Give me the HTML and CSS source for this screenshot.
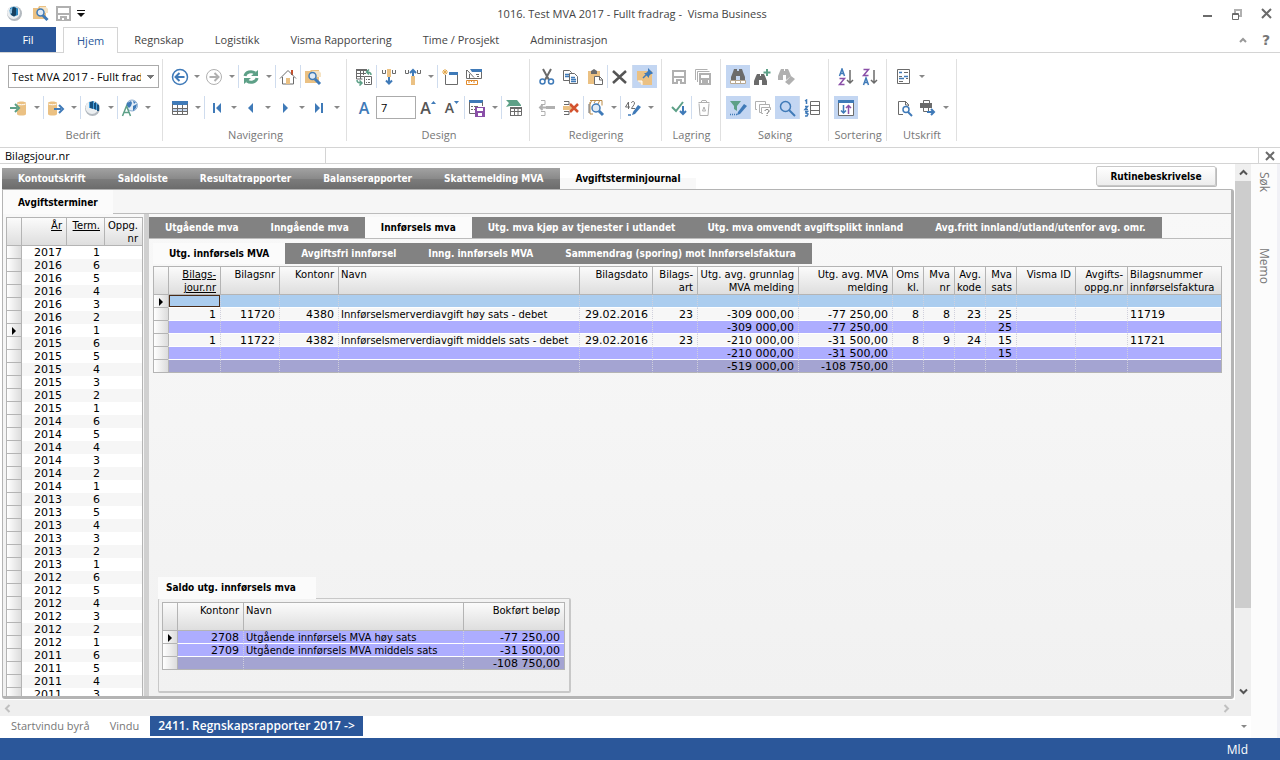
FILE: index.html
```html
<!DOCTYPE html>
<html lang="no">
<head>
<meta charset="utf-8">
<title>1016. Test MVA 2017 - Fullt fradrag - Visma Business</title>
<link rel="stylesheet" href="styles.css">
</head>
<body>
<header class="titlebar">
  <div class="quick">
    <button class="qbtn" aria-label="Visma"><svg width="17" height="17" viewBox="0 0 17 17"><circle cx="8.500" cy="8.500" r="7.500" fill="#b4bac0"/><circle cx="7.500" cy="7.500" r="6.500" fill="#eceff1"/><path d="M4 3l4-1.500 4 2V10l-4 1.500L4 9z" fill="#2a86c0"/><path d="M7 2l3 1v7l-2 1.500L5 10z" fill="#17405f"/><path d="M3 5l3-2v5l-2 1z" fill="#8fc0e0"/></svg></button>
    <button class="qbtn" aria-label="Søk firma"><svg width="17" height="17" viewBox="0 0 17 17"><path class="t" d="M1 3h5l1-2h7v13H1z"/><path d="M8 2h6l2 2v4H8z" fill="#f5e3c4"/><circle cx="8.500" cy="7.500" r="3.500" fill="#dfeaf5" class="bs"/><path class="bs w3" d="M11 10.500l4.500 4.500"/></svg></button>
    <button class="qbtn" aria-label="Lagre"><svg width="15" height="15" viewBox="0 0 15 15"><path d="M1 1h13v13H1z" fill="#fff" stroke="#b0b0b0" stroke-width="2"/><path class="l" d="M1 7h13v2H1zM4 10h7v4H4z"/><path fill="#fff" d="M6 12h2v2H6z"/></svg></button>
    <button class="qbtn small" aria-label="Flere valg"><svg width="8" height="7" viewBox="0 0 8 7"><path d="M0 0h8v1H0zM0 3h8L4 7z" fill="#111"/></svg></button>
  </div>
  <h1>1016. Test MVA 2017 - Fullt fradrag -&nbsp; Visma Business</h1>
  <div class="winbtns">
    <button aria-label="Minimer"><svg width="10" height="12" viewBox="0 0 10 12"><path class="g" d="M0 7h9v2H0z"/></svg></button>
    <button aria-label="Gjenopprett"><svg width="10" height="14" viewBox="0 0 10 14"><path class="ls w2" d="M3 6V3h6v6H7"/><path d="M.5 6.500h6v6h-6zM.5 7.500h6" fill="#fff" stroke="#6b6b6b"/></svg></button>
    <button aria-label="Lukk"><svg width="12" height="12" viewBox="0 0 12 12"><path class="gs w2" d="M1 1l9 9M10 1l-9 9"/></svg></button>
  </div>
</header>

<nav class="menu">
  <button class="file">Fil</button>
  <button class="tab active">Hjem</button>
  <button class="tab">Regnskap</button>
  <button class="tab">Logistikk</button>
  <button class="tab">Visma Rapportering</button>
  <button class="tab">Time / Prosjekt</button>
  <button class="tab">Administrasjon</button>
  <span class="grow"></span>
  <button class="help" aria-label="Skjul båndet"><svg width="8" height="6" viewBox="0 0 8 6"><path d="M1 5l3-3 3 3" fill="none" stroke="#999" stroke-width="2"/></svg></button>
  <button class="help mark">?</button>
</nav>

<section class="ribbon">
  <div class="group">
    <div class="tools"><select aria-label="Bedrift"><option>Test MVA 2017 - Fullt fradrag</option></select></div>
    <div class="tools">
      <button aria-label="Hent"><svg width="18" height="18" viewBox="0 0 18 18"><path class="t" d="M7 4c0-2 9-2 9 0v11c0 2-9 2-9 0z"/><path d="M7.500 5c2 1 6 1 8 0" fill="none" stroke="#fff"/><path d="M0 9h7M5 5l4 4-4 4" class="ns w2"/></svg></button><button class="dd" aria-label="Mer"></button><i class="sep"></i>
      <button aria-label="Send"><svg width="18" height="18" viewBox="0 0 18 18"><path class="t" d="M1 4c0-2 9-2 9 0v11c0 2-9 2-9 0z"/><path d="M1.500 5c2 1 6 1 8 0" fill="none" stroke="#fff"/><path d="M7 10h7M12 6l4 4-4 4" class="bs w2"/></svg></button><button class="dd" aria-label="Mer"></button><i class="sep"></i>
      <button aria-label="Rapport"><svg width="18" height="18" viewBox="0 0 18 18"><circle cx="8.500" cy="9.500" r="7.500" fill="#b4bac0"/><circle cx="8" cy="8.500" r="6.500" fill="#eceff1"/><path d="M6 3l3-1v8l-3-1zM10 4l2-1v8l-2-1zM13 5l2 1v6h-2z" fill="#17507f"/><path d="M5 3h1v6H5zM9 2h1v8H9zM12 4h1v7h-1z" fill="#4aa3e0"/></svg></button><button class="dd" aria-label="Mer"></button><i class="sep"></i>
      <button aria-label="Språk"><svg width="18" height="18" viewBox="0 0 18 18"><circle cx="11" cy="6.500" r="5.500" fill="#e4edf6" stroke="#8fb0d2"/><path class="b" d="M6 4l4-2 1 2-1 3-2 2-2-2zM12 7l4-2-1 4-3 3zM12 2l3 1-2 2z"/><path d="M1.500 17l4-10 4 10M3 13.500h5" class="ns"/></svg></button><button class="dd" aria-label="Mer"></button>
    </div>
    <p>Bedrift</p>
  </div>
  <div class="group">
    <div class="tools">
      <button aria-label="Tilbake"><svg width="18" height="18" viewBox="0 0 18 18"><circle cx="9" cy="9" r="7.500" class="bs n"/><path class="bs w2" d="M4.500 9h9M8.500 5l-4 4 4 4"/></svg></button><button class="dd nr" aria-label="Mer"></button>
      <button aria-label="Frem"><svg width="18" height="18" viewBox="0 0 18 18"><circle cx="9" cy="9" r="7.500" class="ls"/><path class="ls w2" d="M4.500 9h9M9.500 5l4 4-4 4"/></svg></button><button class="dd" aria-label="Mer"></button><i class="sep"></i>
      <button aria-label="Oppdater"><svg width="18" height="18" viewBox="0 0 18 18"><path class="ns w3" d="M3 8a6 5 0 0 1 10-3M15 10a6 5 0 0 1-10 3"/><path class="e" d="M16 2v6h-7zM2 16v-6h7z"/></svg></button><button class="dd" aria-label="Mer"></button><i class="sep"></i>
      <button aria-label="Hjem"><svg width="18" height="18" viewBox="0 0 18 18"><path fill="#c8502c" d="M12 2h2v5h-2z"/><path class="gs" d="M3.500 9v7h11V9M1 10.500l8-8 8 8"/><path class="t" d="M7 10h4v6H7z"/></svg></button><i class="sep"></i>
      <button aria-label="Søk"><svg width="18" height="18" viewBox="0 0 18 18"><path class="t" d="M1 3h5l1-1h8v13H1z"/><path d="M8 3h7l2 2v4H8z" fill="#f5e3c4"/><circle cx="8.500" cy="8" r="3.500" fill="#dfeaf5" class="bs"/><path class="bs w3" d="M11 11l5 5"/></svg></button>
    </div>
    <div class="tools">
      <button aria-label="Tabell"><svg width="18" height="18" viewBox="0 0 18 18"><path class="b" d="M1 2h16v4H1z"/><path d="M2 10h14v3H2z" fill="#c6d8ef"/><path class="gs" d="M1.500 5v10.500h15V5M1 9.500h16M1 12.500h16M6.500 6v10M11.500 6v10"/></svg></button><button class="dd" aria-label="Mer"></button><i class="sep"></i>
      <button aria-label="Første"><svg width="10" height="10" viewBox="0 0 10 10"><path class="b" d="M1 0h2v10H1zM9 0v10L4 5z"/></svg></button><button class="dd nr" aria-label="Mer"></button>
      <button aria-label="Forrige"><svg width="10" height="10" viewBox="0 0 10 10"><path class="b" d="M7 0v10L2 5z"/></svg></button><button class="dd nr" aria-label="Mer"></button>
      <button aria-label="Neste"><svg width="10" height="10" viewBox="0 0 10 10"><path class="b" d="M3 0v10l5-5z"/></svg></button><button class="dd nr" aria-label="Mer"></button>
      <button aria-label="Siste"><svg width="10" height="10" viewBox="0 0 10 10"><path class="b" d="M7 0h2v10H7zM1 0v10l5-5z"/></svg></button><button class="dd" aria-label="Mer"></button>
    </div>
    <p>Navigering</p>
  </div>
  <div class="group">
    <div class="tools">
      <button aria-label="Bytt visning"><svg width="18" height="18" viewBox="0 0 18 18"><path class="gs" d="M1.500 2.500h11M1.500 2v9h6M1 5.500h10M1 8.500h8M5.500 2v9M8.500 2v5M9.500 8.500h7v8h-7zM11 11.500h1M13 11.500h2M11 14.500h1M13 14.500h2"/><path class="g" d="M1 1h11v2H1z"/><path class="ns" d="M16 7c0-2-1-3-4-3M14 1.500L11.500 4 14 6.500M2 12c0 2 1 3 4 3M4.500 12.500L7 15l-2.500 2.500"/></svg></button><i class="sep"></i>
      <button aria-label="Sett inn kolonne"><svg width="18" height="18" viewBox="0 0 18 18"><path class="t" d="M7 1h4v8H7z"/><path class="gs" d="M2.500 2v3.500h3V2M12.500 2v3.500h3V2"/><path class="bs w2" d="M9 9v6M6 12.500l3 3 3-3"/></svg></button>
      <button aria-label="Fjern kolonne"><svg width="18" height="18" viewBox="0 0 18 18"><path class="t" d="M7 8h4v9H7z"/><path class="gs" d="M1.500 2v3.500h3V2M13.500 2v3.500h3V2"/><path class="bs w2" d="M9 8V2M6 5l3-3 3 3"/></svg></button><button class="dd" aria-label="Mer"></button><i class="sep"></i>
      <button aria-label="Nytt vindu"><svg width="18" height="18" viewBox="0 0 18 18"><path class="gs" d="M4.500 7v9.500h12V5"/><path class="b" d="M8 4h9v3H8z"/><path d="M4 1v6M1 4h6M2 2l4 4M6 2L2 6" stroke="#e3a84d" fill="none"/></svg></button>
      <button aria-label="Utforming"><svg width="18" height="18" viewBox="0 0 18 18"><path class="gs" d="M1.500 2v8.500h15V3M2 2l7 7.500M4.500 6v4M11 6.500h3M12 8.500h2"/><path class="b" d="M5 1h12v3H7z"/><path d="M1.500 12.500h11v4h-11zM4 12v3M6.500 12v2M9 12v3" fill="#fff" stroke="#e08a2c"/></svg></button>
    </div>
    <div class="tools">
      <button aria-label="Skrift" class="ltr blue">A</button><input aria-label="Skriftstørrelse" value="7"><button aria-label="Større skrift" class="ltr"><span>A</span><svg width="5" height="16" viewBox="0 0 5 16"><path class="b" d="M0 4l2.500-3L5 4z"/></svg></button><button aria-label="Mindre skrift" class="ltr sm"><span>A</span><svg width="5" height="16" viewBox="0 0 5 16"><path class="b" d="M0 1h5L2.500 4z"/></svg></button><i class="sep"></i>
      <button aria-label="Lagre oppsett"><svg width="18" height="18" viewBox="0 0 18 18"><path class="b" d="M1 1h14v3H1z"/><path class="gs" d="M1.500 3v11.500h6M14.500 3v4M3 7.500h2M6 7.500h4M3 10.500h2M6 10.500h2"/><path fill="#8a4fa8" d="M7 8h10v10H7z"/><path fill="#fff" d="M9 9h6v3H9zM10 14h4v3h-4z"/></svg></button><button class="dd" aria-label="Mer"></button><i class="sep"></i>
      <button aria-label="Standardoppsett"><svg width="18" height="18" viewBox="0 0 18 18"><path class="e" d="M1 1h11l4 5v1H5L1 8l3-4z"/><path class="gs" d="M5.500 8v9M5 16.500h11.500V8M5 12.500h12M9.500 9v8M13 9v8"/><path class="g" d="M5 8h12v2H5z"/></svg></button>
    </div>
    <p>Design</p>
  </div>
  <div class="group">
    <div class="tools">
      <button aria-label="Klipp ut"><svg width="18" height="18" viewBox="0 0 18 18"><path class="gs w2" d="M5 1l6 11M13 1L7 12"/><circle cx="4.500" cy="13.500" r="2.500" class="bs n"/><circle cx="13" cy="13.500" r="2.500" class="bs n"/></svg></button>
      <button aria-label="Kopier"><svg width="18" height="18" viewBox="0 0 18 18"><path class="gs" d="M1.500 2.500h6l2 2v8h-8z"/><path class="bs" d="M3 6.500h4M3 8.500h4"/><path d="M7.500 5.500h5l3 3v7h-8z" fill="#fff" stroke="#6b6b6b"/><path class="bs" d="M9 9.500h4M9 11.500h5M9 13.500h5"/></svg></button>
      <button aria-label="Lim inn"><svg width="18" height="18" viewBox="0 0 18 18"><path class="t" d="M2 3h12v13H2z"/><path class="g" d="M5 3l3-2 3 2v3H5z"/><path d="M8.500 8.500h5l3 3v5h-8z" fill="#fff" stroke="#6b6b6b"/><path class="gs" d="M13.500 8v4H17"/></svg></button><i class="sep"></i>
      <button aria-label="Slett"><svg width="18" height="18" viewBox="0 0 18 18"><path d="M2 3l13 12M15 3L2 15" stroke="#555" stroke-width="2.500"/></svg></button><i class="sep"></i>
      <button class="on" aria-label="Notat"><svg width="18" height="18" viewBox="0 0 18 18"><path class="t" d="M1 3h15v14H6l-5-5z"/><path d="M2 13h4v4" fill="#f7e4c2" stroke="#fff"/><path class="bs" d="M7 10l4-4"/><path class="b" d="M12 0l5 5-1 1-1 0-2 2v2L8 5h2l2-2z"/></svg></button>
    </div>
    <div class="tools">
      <button aria-label="Sett inn linje"><svg width="18" height="18" viewBox="0 0 18 18"><path class="ls" d="M3 1.500h4v4H3M3 12.500h4v4H3"/><path class="l" d="M8 7h9v3H8z"/><path class="ls w2" d="M2 8.500h6M4.500 6L2 8.500 4.500 11"/></svg></button>
      <button aria-label="Slett linje"><svg width="18" height="18" viewBox="0 0 18 18"><path class="gs" d="M2 2.500h5v3H2M2 12.500h5v3H2"/><path class="t" d="M1 7h9v4H1z"/><path d="M8 5l8 8M16 5l-8 8" stroke="#d3532f" stroke-width="2.500"/></svg></button><i class="sep"></i>
      <button aria-label="Finn"><svg width="18" height="18" viewBox="0 0 18 18"><path d="M3 1.500h12v5M3 3v12h3M5 1l-2 4M9 1L7 4M13 1l-2 4" fill="none" stroke="#b88a48"/><path class="gs" d="M2 5v9"/><circle cx="9" cy="9" r="4" fill="#dfeaf5" class="bs"/><path class="bs w3" d="M12 12l4 4"/></svg></button><button class="dd" aria-label="Mer"></button><i class="sep"></i>
      <button aria-label="Rediger verdi"><svg width="18" height="18" viewBox="0 0 18 18"><path class="gs" d="M4.500 10V3L1.500 8H6M7.500 4c0-2 3-2 3 0S8 8 7.500 9.500H11"/><path class="b" d="M14 6l3 2-6 7-3 1 1-3z"/><path class="bs" d="M4 16h3"/></svg></button><button class="dd" aria-label="Mer"></button>
    </div>
    <p>Redigering</p>
  </div>
  <div class="group">
    <div class="tools">
      <button aria-label="Lagre"><svg width="18" height="18" viewBox="0 0 18 18"><path class="ls w2" d="M3 3h12v12H3z"/><path class="l" d="M3 8h12v2H3zM6 11h6v5H6z"/><path fill="#fff" d="M8 13h2v3H8z"/></svg></button>
      <button aria-label="Lagre alle"><svg width="18" height="18" viewBox="0 0 18 18"><path class="ls" d="M1.500 12V1.500h12M3.500 14V3.500h12"/><path class="ls w2" d="M6 6h10v10H6z"/><path class="l" d="M6 10h10v2H6zM8 12h6v4H8z"/></svg></button>
    </div>
    <div class="tools">
      <button aria-label="Behandle"><svg width="18" height="18" viewBox="0 0 18 18"><path class="ns w2" d="M2 8l4 4 7-9"/><path class="bs w2" d="M13 7v8M10 12l3 3 3-3"/></svg></button><i class="sep"></i>
      <button aria-label="Forkast"><svg width="18" height="18" viewBox="0 0 18 18"><path class="ls" d="M4 4.500l1 12h8l1-12M3.500 3.500h11M6 3.500l1-2h4l1 2M7.500 12l1.500-4 1.500 4z"/></svg></button>
    </div>
    <p>Lagring</p>
  </div>
  <div class="group">
    <div class="tools">
      <button class="on" aria-label="Søk i liste"><svg width="18" height="18" viewBox="0 0 18 18"><path class="g" d="M5 1h3v2h2V1h3l1 3 2 5v3h-5V8H7v4H2V9l2-5z"/><path d="M1.500 12.500h15v3h-15zM6.500 12v4M11.500 12v4" fill="#fff" stroke="#b8a890"/></svg></button>
      <button aria-label="Utvid søk"><svg width="18" height="18" viewBox="0 0 18 18"><path class="g" d="M4 6h3v2h1V6h3l1 2 2 5v4H9v-5H6v5H1v-4l2-5z"/><path class="ns w2" d="M14 1v7M10.500 4.500h7"/></svg></button>
      <button aria-label="Nullstill søk"><svg width="18" height="18" viewBox="0 0 18 18"><path class="l" d="M4 1h3v2h1V1h3l1 2 2 5-5 4V7H6v5H1V8l2-5zM8 14l6-6 4 3-6 6z"/></svg></button>
    </div>
    <div class="tools">
      <button class="on" aria-label="Rediger filter"><svg width="18" height="18" viewBox="0 0 18 18"><path class="e" d="M1 2h11L8 7v5l-3-2V7z"/><path class="b" d="M15 5l3 2-7 8-3 1 1-3z"/><path d="M1 15.500h7" class="bs" stroke-dasharray="1 1"/></svg></button><i class="sep"></i>
      <button aria-label="Hvor brukt"><svg width="18" height="18" viewBox="0 0 18 18"><path class="ls" d="M3 10.500H1.500v-8h10V5M7 13.500H5.500v-8h10V9M9 14.500H7.500v-6h9V11"/><path class="gs" d="M11 12c0-2 4-2 4 0s-2 1-2 3M13 16v1"/></svg></button><button class="on" aria-label="Forstørr"><svg width="18" height="18" viewBox="0 0 18 18"><circle cx="7.500" cy="7.500" r="5" class="bs n"/><path class="bs w2" d="M11 11l6 6"/></svg></button><i class="sep"></i>
      <button aria-label="Nummerer"><svg width="18" height="18" viewBox="0 0 18 18"><path class="gs" d="M7.500 2.500h9v13h-9zM7 6.500h10M7 11.500h10"/><path class="bs" d="M2 2l1.500-1v4M2 7.500h2.500L2 10.500h3M2 12.500h2.500L3 14l2 1-1 2H2"/></svg></button>
    </div>
    <p>Søking</p>
  </div>
  <div class="group">
    <div class="tools">
      <button aria-label="Stigende"><svg width="18" height="18" viewBox="0 0 18 18"><path class="bs" d="M2.500 8l2.500-7 2.500 7M3.500 5.500h3"/><path d="M2.500 10.500h5l-5 6h5" fill="none" stroke="#8a4fa8" stroke-width="1.500"/><path class="gs" stroke-width="1.500" d="M13 2v13M10 12l3 3 3-3"/></svg></button>
      <button aria-label="Synkende"><svg width="18" height="18" viewBox="0 0 18 18"><path class="bs" d="M2.500 17l2.500-7 2.500 7M3.500 14.500h3"/><path d="M2.500 1.500h5l-5 6h5" fill="none" stroke="#8a4fa8" stroke-width="1.500"/><path class="gs" stroke-width="1.500" d="M13 2v13M10 12l3 3 3-3"/></svg></button>
    </div>
    <div class="tools">
      <button class="on" aria-label="Sortering"><svg width="18" height="18" viewBox="0 0 18 18"><path d="M1.500 2.500h15v14h-15z" fill="#fff" stroke="#6b6b6b"/><path class="b" d="M1 1h16v3H1z"/><path class="bs" d="M6.500 6v8M4 11.500L6.500 14 9 11.500"/><path d="M11.500 15V6M9 9l2.500-2.500L14 9" fill="none" stroke="#8a4fa8" stroke-width="1.500"/></svg></button>
    </div>
    <p>Sortering</p>
  </div>
  <div class="group">
    <div class="tools">
      <button aria-label="Rapport"><svg width="18" height="18" viewBox="0 0 18 18"><path class="gs" d="M2.500 1.500h12v14h-12zM9 4.500h4M4 8.500h3M4 13.500h4M11 10.500h2"/><path class="bs" d="M4 4.500h3M9 8.500h4M4 10.500h5"/></svg></button><button class="dd" aria-label="Mer"></button>
    </div>
    <div class="tools">
      <button aria-label="Forhåndsvis"><svg width="18" height="18" viewBox="0 0 18 18"><path class="gs" d="M8 15.500H3.500v-13h7l3 3V7M10.500 2v4H14"/><circle cx="11" cy="10.500" r="3" class="bs n"/><path class="bs w2" d="M13 13l4 4"/></svg></button><button aria-label="Skriv ut"><svg width="18" height="18" viewBox="0 0 18 18"><path class="gs" d="M4.500 4V1.500h6V4M4.500 8.500h5v4h-5z"/><path class="g" d="M1 4h12v5H1z"/><path class="bs w2" d="M8 13h7M12 10l3 3-3 3"/></svg></button><button class="dd" aria-label="Mer"></button>
    </div>
    <p>Utskrift</p>
  </div>
</section>

<div class="fieldbar"><span class="fname">Bilagsjour.nr</span><span class="fvalue"></span><button aria-label="Lukk felt"><svg width="10" height="10" viewBox="0 0 10 10"><path class="gs w2" d="M1 1l8 8M9 1L1 9"/></svg></button></div>

<div class="workspace">
  <div class="main">
    <div class="view">
      <div class="page">
        <div class="toprow">
          <nav class="tabs glossy"><button>Kontoutskrift</button><button>Saldoliste</button><button>Resultatrapporter</button><button>Balanserapporter</button><button>Skattemelding MVA</button><button class="sel">Avgiftsterminjournal</button></nav>
          <button class="routine">Rutinebeskrivelse</button>
        </div>
        <div class="sheet">
          <div class="subtab"><h2>Avgiftsterminer</h2></div>
          <div class="split">
            <div class="terms">
            <table class="grid">
              <colgroup><col class="c15"><col class="c45"><col class="c38"><col></colgroup>
              <thead><tr><th></th><th><u>År</u></th><th><u>Term.</u></th><th>Oppg. nr</th></tr></thead>
              <tbody class="zebra">
                <tr><td></td><td>2017</td><td>1</td><td></td></tr>
                <tr><td></td><td>2016</td><td>6</td><td></td></tr>
                <tr><td></td><td>2016</td><td>5</td><td></td></tr>
                <tr><td></td><td>2016</td><td>4</td><td></td></tr>
                <tr><td></td><td>2016</td><td>3</td><td></td></tr>
                <tr><td></td><td>2016</td><td>2</td><td></td></tr>
                <tr class="cur"><td></td><td>2016</td><td>1</td><td></td></tr>
                <tr><td></td><td>2015</td><td>6</td><td></td></tr>
                <tr><td></td><td>2015</td><td>5</td><td></td></tr>
                <tr><td></td><td>2015</td><td>4</td><td></td></tr>
                <tr><td></td><td>2015</td><td>3</td><td></td></tr>
                <tr><td></td><td>2015</td><td>2</td><td></td></tr>
                <tr><td></td><td>2015</td><td>1</td><td></td></tr>
                <tr><td></td><td>2014</td><td>6</td><td></td></tr>
                <tr><td></td><td>2014</td><td>5</td><td></td></tr>
                <tr><td></td><td>2014</td><td>4</td><td></td></tr>
                <tr><td></td><td>2014</td><td>3</td><td></td></tr>
                <tr><td></td><td>2014</td><td>2</td><td></td></tr>
                <tr><td></td><td>2014</td><td>1</td><td></td></tr>
                <tr><td></td><td>2013</td><td>6</td><td></td></tr>
                <tr><td></td><td>2013</td><td>5</td><td></td></tr>
                <tr><td></td><td>2013</td><td>4</td><td></td></tr>
                <tr><td></td><td>2013</td><td>3</td><td></td></tr>
                <tr><td></td><td>2013</td><td>2</td><td></td></tr>
                <tr><td></td><td>2013</td><td>1</td><td></td></tr>
                <tr><td></td><td>2012</td><td>6</td><td></td></tr>
                <tr><td></td><td>2012</td><td>5</td><td></td></tr>
                <tr><td></td><td>2012</td><td>4</td><td></td></tr>
                <tr><td></td><td>2012</td><td>3</td><td></td></tr>
                <tr><td></td><td>2012</td><td>2</td><td></td></tr>
                <tr><td></td><td>2012</td><td>1</td><td></td></tr>
                <tr><td></td><td>2011</td><td>6</td><td></td></tr>
                <tr><td></td><td>2011</td><td>5</td><td></td></tr>
                <tr><td></td><td>2011</td><td>4</td><td></td></tr>
                <tr><td></td><td>2011</td><td>3</td><td></td></tr>
              </tbody>
            </table>
            </div>
            <div class="detail">
              <nav class="tabs"><button>Utgående mva</button><button>Inngående mva</button><button class="sel">Innførsels mva</button><button>Utg. mva kjøp av tjenester i utlandet</button><button>Utg. mva omvendt avgiftsplikt innland</button><button>Avg.fritt innland/utland/utenfor avg. omr.</button></nav>
              <div class="inner">
                <nav class="tabs second"><button class="sel">Utg. innførsels MVA</button><button>Avgiftsfri innførsel</button><button>Inng. innførsels MVA</button><button>Sammendrag (sporing) mot Innførselsfaktura</button></nav>
                <table class="grid entries">
                  <colgroup><col class="c15"><col class="c52"><col class="c59"><col class="c59"><col><col class="c73"><col class="c45"><col class="c101"><col class="c94"><col class="c31"><col class="c31"><col class="c31"><col class="c31"><col class="c59"><col class="c52"><col class="c94"></colgroup>
                  <thead><tr><th></th><th><u>Bilags-<br>jour.nr</u></th><th>Bilagsnr</th><th>Kontonr</th><th class="tx">Navn</th><th>Bilagsdato</th><th>Bilags-<br>art</th><th>Utg. avg. grunnlag<br>MVA melding</th><th>Utg. avg. MVA<br>melding</th><th>Oms<br>kl.</th><th>Mva<br>nr</th><th>Avg.<br>kode</th><th>Mva<br>sats</th><th>Visma ID</th><th>Avgifts-<br>oppg.nr</th><th class="tx">Bilagsnummer<br>innførselsfaktura</th></tr></thead>
                  <tbody>
                    <tr class="cur new"><td></td><td class="focus"></td><td></td><td></td><td></td><td></td><td></td><td></td><td></td><td></td><td></td><td></td><td></td><td></td><td></td><td></td></tr>
                    <tr><td></td><td>1</td><td>11720</td><td>4380</td><td class="tx">Innførselsmerverdiavgift høy sats - debet</td><td>29.02.2016</td><td>23</td><td>-309 000,00</td><td>-77 250,00</td><td>8</td><td>8</td><td>23</td><td>25</td><td></td><td></td><td class="nl">11719</td></tr>
                    <tr class="sum"><td></td><td></td><td></td><td></td><td></td><td></td><td></td><td>-309 000,00</td><td>-77 250,00</td><td></td><td></td><td></td><td>25</td><td></td><td></td><td></td></tr>
                    <tr><td></td><td>1</td><td>11722</td><td>4382</td><td class="tx">Innførselsmerverdiavgift middels sats - debet</td><td>29.02.2016</td><td>23</td><td>-210 000,00</td><td>-31 500,00</td><td>8</td><td>9</td><td>24</td><td>15</td><td></td><td></td><td class="nl">11721</td></tr>
                    <tr class="sum"><td></td><td></td><td></td><td></td><td></td><td></td><td></td><td>-210 000,00</td><td>-31 500,00</td><td></td><td></td><td></td><td>15</td><td></td><td></td><td></td></tr>
                    <tr class="total"><td></td><td></td><td></td><td></td><td></td><td></td><td></td><td>-519 000,00</td><td>-108 750,00</td><td></td><td></td><td></td><td></td><td></td><td></td><td></td></tr>
                  </tbody>
                </table>
                <section class="balance">
                  <h2>Saldo utg. innførsels mva</h2>
                  <div class="balbox">
                    <table class="grid">
                      <colgroup><col class="c15"><col class="c66"><col><col class="c101"></colgroup>
                      <thead><tr><th></th><th>Kontonr</th><th class="tx">Navn</th><th>Bokført beløp</th></tr></thead>
                      <tbody>
                        <tr class="cur sum"><td></td><td>2708</td><td class="tx">Utgående innførsels MVA høy sats</td><td>-77 250,00</td></tr>
                        <tr class="sum"><td></td><td>2709</td><td class="tx">Utgående innførsels MVA middels sats</td><td>-31 500,00</td></tr>
                        <tr class="total"><td></td><td></td><td></td><td>-108 750,00</td></tr>
                      </tbody>
                    </table>
                  </div>
                </section>
              </div>
            </div>
          </div>
        </div>
      </div>
      <div class="vscroll"><button aria-label="Opp"><svg width="9" height="7" viewBox="0 0 9 7"><path d="M1 5.500L4.500 2 8 5.500" fill="none" stroke="#555" stroke-width="2"/></svg></button><div class="track"><div class="thumb"></div></div><button aria-label="Ned"><svg width="9" height="7" viewBox="0 0 9 7"><path d="M1 1.500L4.500 5 8 1.500" fill="none" stroke="#555" stroke-width="2"/></svg></button></div>
    </div>
    <div class="hscroll"><button aria-label="Venstre"><svg width="7" height="9" viewBox="0 0 7 9"><path d="M5.500 1L2 4.500 5.500 8" fill="none" stroke="#c0c0c0" stroke-width="2"/></svg></button><button aria-label="Høyre"><svg width="7" height="9" viewBox="0 0 7 9"><path d="M1.500 1L5 4.500 1.500 8" fill="none" stroke="#c0c0c0" stroke-width="2"/></svg></button></div>
    <nav class="wintabs"><button>Startvindu byrå</button><button>Vindu</button><button class="sel">2411. Regnskapsrapporter 2017 -&gt;</button><span class="grow"></span><button class="dd" aria-label="Vinduer"></button></nav>
  </div>
  <aside class="side"><button>Søk</button><button class="memo">Memo</button></aside>
</div>
<footer class="status">Mld</footer>
</body>
</html>
```
FILE: styles.css
```css
* { box-sizing: border-box; }
body {
  margin: 0;
  height: 100vh;
  display: flex;
  flex-direction: column;
  overflow: hidden;
  background: #fff;
  color: #444;
  font: 11px/16px "Open Sans", "Noto Sans", sans-serif;
}
button {
  border: 0;
  padding: 0;
  background: none;
  color: inherit;
  font: inherit;
  white-space: nowrap;
}
h1, h2, p { margin: 0; font: inherit; }
svg { display: block; flex: none; }
.grow { flex: 1; }

/* icon palette */
.b { fill: #3f7ab8; }
.t { fill: #ebc183; }
.g { fill: #6b6b6b; }
.l { fill: #b0b0b0; }
.e { fill: #5da087; }
.bs { stroke: #3f7ab8; stroke-width: 1.5; }
.gs { stroke: #6b6b6b; fill: none; }
.ls { stroke: #b0b0b0; fill: none; }
.ns { stroke: #5da087; fill: none; stroke-width: 1.5; }
path.bs, .n { fill: none; }
.w2 { stroke-width: 2; }
.w3 { stroke-width: 3; }

/* title bar */
.titlebar {
  display: grid;
  grid-template-columns: 1fr auto 1fr;
  align-items: center;
  height: 27px;
  flex: none;
}
.titlebar h1 { padding-right: 16px; }
.quick { display: flex; align-items: center; gap: 7px; padding-left: 6px; }
.qbtn:nth-child(2) { margin-left: 2px; }
.qbtn.small { margin-left: -1px; }
.winbtns { display: flex; align-items: center; justify-content: flex-end; gap: 19px; padding-right: 7px; }

/* menu tabs */
.menu {
  display: flex;
  align-items: stretch;
  gap: 1px;
  height: 26px;
  flex: none;
  padding-right: 8px;
  border-bottom: 1px solid #d4d4d4;
}
.file { width: 56px; margin-right: 6px; background: #2b579a; color: #fff; }
.tab { padding: 0 15px; }
.tab.active {
  margin-bottom: -1px;
  padding: 0 13px;
  background: #fff;
  border: 1px solid #d4d4d4;
  border-bottom: 0;
  color: #2b579a;
}
.help { display: flex; align-items: center; justify-content: center; width: 12px; margin-left: 10px; }
.mark { color: #777; font: bold 14px "DejaVu Sans", sans-serif; }

/* ribbon */
.ribbon {
  display: flex;
  height: 95px;
  flex: none;
  padding: 6px 0 6px 2px;
  border-bottom: 1px solid #d4d4d4;
}
.group { padding: 6px 3px 0 5px; border-right: 1px solid #e0e0e0; }
.group:nth-child(n+4) { padding-right: 4px; }
.group p { color: #777; text-align: center; }
.tools { display: flex; height: 23px; margin-bottom: 8px; }
.tools button { display: flex; align-items: center; justify-content: center; width: 24px; height: 23px; }
.tools .sep { width: 1px; height: 23px; background: #cfdcee; }
.tools .on { background: #c3d6f2; }
.tools .ltr { color: #555; font-size: 16px; font-weight: 600; }
.tools .blue { color: #3f7ab8; }
.tools .sm { font-size: 14px; }
.tools .dd { width: 12px; }
.tools .dd.nr { width: 10px; }
.dd::before {
  content: "";
  border: 3px solid transparent;
  border-top-color: #888;
  border-bottom: 0;
}
.tools select {
  width: 151px;
  margin-left: 1px;
  padding: 0 17px 0 3px;
  appearance: none;
  border: 1px solid #ababab;
  border-radius: 0;
  background:
    linear-gradient(to bottom left, #777 50%, transparent 50%) right 7px top 9px / 4px 4px no-repeat,
    linear-gradient(to bottom right, #777 50%, transparent 50%) right 3px top 9px / 4px 4px no-repeat,
    #fff;
  color: #000;
  font: inherit;
}
.tools input {
  width: 40px;
  padding: 0 4px;
  border: 1px solid #ababab;
  color: #000;
  font: inherit;
}

/* field bar */
.fieldbar { display: flex; height: 16px; flex: none; border-bottom: 1px solid #d4d4d4; color: #000; line-height: 15px; }
.fname { width: 326px; padding-left: 5px; border-right: 1px solid #d4d4d4; }
.fvalue { flex: 1; border-right: 1px solid #d4d4d4; }
.fieldbar button { display: flex; align-items: center; justify-content: center; width: 21px; }

/* workspace */
.workspace { display: flex; flex: 1; min-height: 0; }
.main { display: flex; flex-direction: column; flex: 1; min-width: 0; }
.view { display: flex; flex: 1; min-height: 0; }
.page { display: flex; flex-direction: column; flex: 1; min-width: 0; padding: 4px 1px 1px 2px; color: #000; }
.toprow { display: flex; align-items: flex-start; justify-content: space-between; }

.tabs { display: flex; font: bold 10px/21px "DejaVu Sans Condensed", "Open Sans", sans-serif; }
.tabs button { height: 21px; padding: 0 16px; background: #828282; color: #fff; }
.tabs .sel { background: #fbfbfb; color: #000; }
.glossy button { background: linear-gradient(#a2a2a2, #8a8a8a 50%, #7c7c7c 52%, #6c6c6c); }
.glossy .sel { background: linear-gradient(#fff 48%, #f8f8f8 50%); }
.routine {
  width: 120px;
  height: 20px;
  margin: -2px 18px 0 0;
  border: 1px solid #c8c8c8;
  border-radius: 2px;
  box-shadow: 1px 1px 0 #bbb;
  background: linear-gradient(#fff, #ededed);
  font: bold 10px "DejaVu Sans Condensed", "Open Sans", sans-serif;
}
.sheet {
  display: flex;
  flex-direction: column;
  flex: 1;
  min-height: 0;
  border: solid #b4b4b4;
  border-width: 1px 3px 3px 1px;
  border-radius: 0 3px 3px 3px;
  background: #f6f6f6;
}
.subtab { display: flex; flex: none; height: 24px; border-bottom: 1px solid #bcbcbc; }
.subtab h2, .balance h2 {
  margin-bottom: -1px;
  padding: 1px 15px 0;
  background: #fbfbfb;
  font: bold 10px/23px "DejaVu Sans Condensed", "Open Sans", sans-serif;
}
.split { display: flex; flex: 1; min-height: 0; padding-left: 3px; background: linear-gradient(#f8f8f8, #f1f1f1); }
.terms { width: 137px; margin-top: 3px; overflow: hidden; flex: none; }
.detail {
  display: flex;
  flex-direction: column;
  flex: 1;
  min-width: 0;
  margin-left: 1px;
  padding-top: 3px;
  border-left: 5px solid #d0d0d0;
}
.detail > .tabs { border-bottom: 1px solid #bcbcbc; }
.inner { display: flex; flex-direction: column; flex: 1; padding: 4px 9px 3px 4px; }
.second { margin-bottom: 2px; }

/* data grids */
.grid {
  width: 100%;
  table-layout: fixed;
  border-spacing: 0;
  border: solid #b4b4b4;
  border-width: 1px 1px 0 0;
  font: 10px/13px "DejaVu Sans", sans-serif;
}
.c15 { width: 15px; } .c31 { width: 31px; } .c38 { width: 38px; } .c45 { width: 45px; }
.c52 { width: 52px; } .c59 { width: 59px; } .c66 { width: 66px; } .c73 { width: 73px; }
.c94 { width: 94px; } .c101 { width: 101px; }
.grid th {
  height: 28px;
  padding: 1px 4px 0 2px;
  border-left: 1px solid #b4b4b4;
  border-bottom: 1px solid #b4b4b4;
  background: linear-gradient(#fbfbfb, #dedede);
  font-weight: normal;
  text-align: right;
  vertical-align: top;
}
.grid td {
  height: 13px;
  padding: 1px 4px 0 2px;
  border-left: 1px dotted #d0d0dc;
  border-bottom: 1px solid #fff;
  background: #f7f7f7;
  font-size: 11px;
  line-height: 11px;
  text-align: right;
  white-space: nowrap;
}
.grid .tx, .grid .nl { text-align: left; }
.grid td.tx { font-size: 10px; }
.grid td:first-child {
  padding: 0;
  border-left: 1px solid #b4b4b4;
  border-bottom-color: #b4b4b4;
}
.grid td:nth-child(2) { border-left: 1px solid #b4b4b4; }
.cur td:first-child::before {
  content: "";
  float: right;
  margin: 1px 5px 0 0;
  border: 4px solid transparent;
  border-left-color: #000;
  border-right: 0;
}
.grid .zebra td { padding-top: 0; border-left-color: transparent; border-bottom: 0; background: #fff; line-height: 12px; }
.grid .zebra tr:nth-child(even) td { background: #f6f6f6; }
.grid .zebra td:first-child { border-left-color: #b4b4b4; border-bottom: 1px solid #b4b4b4; }
.grid .zebra td:nth-child(2) { border-left-color: #b4b4b4; }
.grid .new td { background: #abcdef; }
.grid .sum td { background: #adadff; }
.grid .total td { background: #a4a4d2; border-bottom-color: #b4b4b4; }
.grid tbody tr:nth-child(n) td:first-child { background: linear-gradient(90deg, #fff, #dcdcdc); }
.grid .focus { box-shadow: inset 0 0 0 1px #4a2c18; }

.balance { width: 413px; margin: auto 0 0 5px; }
.balance h2 { display: inline-block; width: 158px; padding: 0 8px; vertical-align: top; line-height: 22px; position: relative; }
.balbox {
  height: 95px;
  padding: 3px 4px 3px 3px;
  border: solid #c8c8c8;
  border-width: 1px 2px 2px 1px;
  border-radius: 2px;
}

/* scroll bars */
.vscroll { display: flex; flex-direction: column; width: 16px; background: #efefef; }
.vscroll button { display: flex; align-items: center; justify-content: center; height: 17px; }
.track { flex: 1; }
.thumb { height: 85%; background: #cdcdcd; }
.hscroll { display: flex; justify-content: space-between; align-items: center; height: 16px; padding: 0 21px 0 4px; background: #efefef; }

.wintabs { display: flex; gap: 2px; height: 22px; padding: 0 4px 2px 2px; color: #777; }
.wintabs button { padding: 0 9px; }
.wintabs .sel { padding: 0 8px; background: #2b579a; color: #fff; font-size: 12px; font-weight: 600; }
.wintabs .dd { display: flex; align-items: center; padding: 0; }

.side {
  width: 29px;
  padding-top: 8px;
  background: #fcfcfc;
  border-right: 3px solid #f1f1f6;
  color: #777;
  font-size: 12px;
}
.side button { display: block; padding-left: 5px; writing-mode: vertical-rl; }
.side .memo { margin-top: 56px; }
.status { height: 22px; flex: none; padding-right: 32px; background: #2b579a; color: #fff; font-size: 12px; line-height: 23px; text-align: right; }
```
